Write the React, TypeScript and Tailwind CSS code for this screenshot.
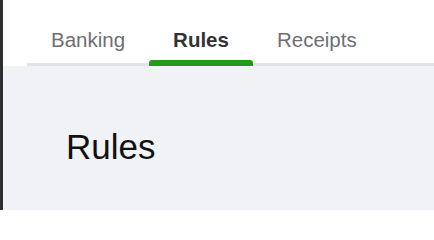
import { useState } from "react";

const TABS = ["Banking", "Rules", "Receipts"];

export default function App() {
    const [active, setActive] = useState("Rules");

    return (
        <div
            className="w-[434px] h-[210px] flex border-l-[3px] border-[#2f2f2f] bg-[#f1f2f6] overflow-hidden"
            style={{ fontFamily: '"Liberation Sans", Arial, sans-serif' }}
        >
            <div className="flex-1 flex flex-col">

                {/* Tabs */}

                <div className="bg-white pl-6">
                    <div className="flex border-b-[3px] border-[#e2e3e7]">
                        {TABS.map((tab) => (
                            <button
                                key={tab}
                                onClick={() => setActive(tab)}
                                className={`relative px-6 pt-[28px] pb-[12px] text-[20.5px] leading-[23px] ${
                                    active === tab
                                        ? "font-bold text-[#333333]"
                                        : "text-[#6e6e73]"
                                }`}
                            >
                                {tab}
                                {active === tab && (
                                    <span className="absolute left-0 right-0 bottom-[-3px] h-[6px] rounded-t-[3px] bg-[#239a1c]" />
                                )}
                            </button>
                        ))}
                    </div>
                </div>

                {/* Content */}

                <div className="flex-1 pl-[63px] pt-[61px]">
                    <h1 className="text-[35px] leading-[40px] text-[#111111]">
                        {active}
                    </h1>
                </div>

            </div>
        </div>
    );
}
